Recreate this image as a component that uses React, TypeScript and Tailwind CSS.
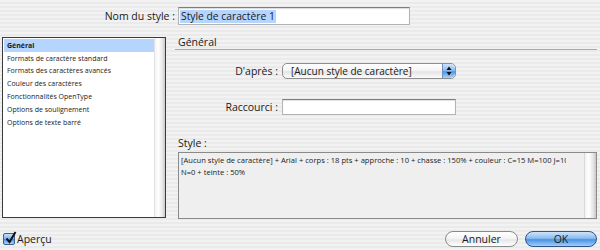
import React from 'react'

const listItems = [
  'Général',
  'Formats de caractère standard',
  'Formats des caractères avancés',
  'Couleur des caractères',
  'Fonctionnalités OpenType',
  'Options de soulignement',
  'Options de texte barré',
]

function AquaStepper() {
  return (
    <div className="w-[13px] h-full rounded-r-[5px] border-l border-[#6b8fc4] bg-[linear-gradient(180deg,#cfe3fb_0%,#8ebdf2_45%,#4f97e6_55%,#a6d4fb_100%)] flex items-center justify-center">
      <svg width="6" height="10" viewBox="0 0 6 10">
        <path d="M3 0.5 L5.5 4 L0.5 4 Z" fill="#111" />
        <path d="M3 9.5 L5.5 6 L0.5 6 Z" fill="#111" />
      </svg>
    </div>
  )
}

export default function App() {
  return (
    <div className="w-[600px] h-[250px] overflow-hidden flex flex-col text-[#1a1a1a] font-['Open_Sans','Liberation_Sans',sans-serif] bg-[repeating-linear-gradient(180deg,#f2f2f2_0px,#f2f2f2_2px,#eaeaea_2px,#eaeaea_4px)]">
      {/* Nom du style */}
      <div className="flex items-center mt-[7px] h-[18px]">
        <span className="w-[175px] text-right text-[10.5px] leading-none">Nom du style :</span>
        <div className="ml-[3px] w-[232px] h-[18px] bg-white border border-[#b3b3b3] border-t-[#7d7d7d] shadow-[inset_0_1px_1px_rgba(0,0,0,0.15)] flex items-center pl-[1px]">
          <span className="bg-[#b5d5ff] text-[10.3px] leading-[13px] px-[1px]">Style de caractère 1</span>
        </div>
      </div>

      {/* Main area */}
      <div className="flex mt-[12px]">
        {/* Category list */}
        <div className="ml-[2px] w-[164px] h-[181px] bg-white border border-[#3a3a3a] flex">
          <div className="flex-1 pt-[1px] pl-[1px]">
            {listItems.map((item, i) => (
              <div
                key={item}
                className={`h-[12.8px] flex items-center pl-[3px] text-[7px] leading-none ${i === 0 ? 'bg-[#b5d5ff] font-bold' : ''}`}
              >
                {item}
              </div>
            ))}
          </div>
          <div className="w-[11px] h-full bg-[linear-gradient(90deg,#f4f4f4_0%,#ffffff_35%,#e6e6e6_75%,#c9c9c9_100%)] border-l border-[#e2e2e2]" />
        </div>

        {/* Right panel */}
        <div className="ml-[9px] w-[422px] flex flex-col">
          <div className="h-[13px] border-b border-[#a9a9a9] pl-[3px] text-[10.5px] leading-[11px]">Général</div>

          <div className="flex items-center mt-[13px] h-[16px]">
            <span className="w-[103px] text-right text-[10.5px] leading-none">D'après :</span>
            <div className="ml-[4px] w-[174px] h-[16px] rounded-[5px] border border-[#8e8e8e] bg-[linear-gradient(180deg,#ffffff_0%,#f3f3f3_50%,#e4e4e4_55%,#fbfbfb_100%)] flex overflow-hidden">
              <span className="flex-1 pl-[8px] text-[10px] leading-[14px] whitespace-nowrap">[Aucun style de caractère]</span>
              <AquaStepper />
            </div>
          </div>

          <div className="flex items-center mt-[20px] h-[16px]">
            <span className="w-[103px] text-right text-[10.5px] leading-none">Raccourci :</span>
            <div className="ml-[4px] w-[174px] h-[16px] bg-white border border-[#b3b3b3] border-t-[#7d7d7d] shadow-[inset_0_1px_1px_rgba(0,0,0,0.12)]" />
          </div>

          <div className="mt-[22px] pl-[3px] text-[10.5px] leading-[12px]">Style :</div>

          <div className="mt-[3px] ml-[3px] w-[419px] h-[67px] border border-[#8a8a8a] bg-[#efefef] flex">
            <div className="flex-1 overflow-hidden pl-[2px] pt-[1px] text-[7.6px] leading-[12px] text-[#222]">
              <div className="w-[385px] overflow-hidden whitespace-nowrap">
                [Aucun style de caractère] + Arial + corps : 18 pts + approche : 10 + chasse : 150% + couleur : C=15 M=100 J=100
              </div>
              <div className="whitespace-nowrap">N=0 + teinte : 50%</div>
            </div>
            <div className="w-[12px] h-full bg-[linear-gradient(90deg,#f2f2f2_0%,#ffffff_35%,#e4e4e4_75%,#c8c8c8_100%)] border-l border-[#d8d8d8]" />
          </div>
        </div>
      </div>

      {/* Bottom bar */}
      <div className="flex items-center mt-[12px] h-[16px]">
        <div className="ml-[3px] w-[12px] h-[12px] rounded-[2px] border border-[#3d5f92] bg-[linear-gradient(180deg,#c7e0fb_0%,#7fb4ef_45%,#4a93e4_55%,#a9d4fb_100%)] relative">
          <svg className="absolute left-[1px] -top-[3px]" width="12" height="13" viewBox="0 0 12 13">
            <path d="M1.5 7.5 L4.5 11 L10.5 1" stroke="#111" strokeWidth="2" fill="none" />
          </svg>
        </div>
        <span className="ml-[2px] text-[10.5px] leading-none">Aperçu</span>

        <div className="ml-auto flex items-center gap-[7px] mr-[3px]">
          <button className="w-[73px] h-[16px] rounded-full border border-[#8a8a8a] bg-[linear-gradient(180deg,#ffffff_0%,#f4f4f4_50%,#e6e6e6_55%,#ffffff_100%)] text-[10.5px] leading-none">
            Annuler
          </button>
          <button className="w-[72px] h-[16px] rounded-full border border-[#34538a] bg-[linear-gradient(180deg,#cfe4fb_0%,#89bbf1_45%,#4b92e3_55%,#9fd0fb_100%)] text-[10.5px] leading-none">
            OK
          </button>
        </div>
      </div>
    </div>
  )
}
